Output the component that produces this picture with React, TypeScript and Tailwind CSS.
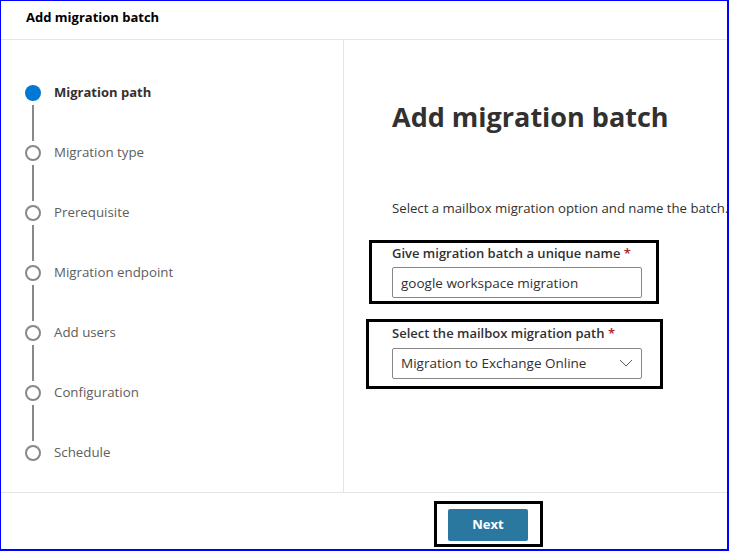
const font = { fontFamily: '"Open Sans", "Noto Sans", Arial, sans-serif' };

const steps = [
  "Migration path",
  "Migration type",
  "Prerequisite",
  "Migration endpoint",
  "Add users",
  "Configuration",
  "Schedule",
];

function Stepper() {
  return (
    <div className="flex flex-col pl-[24px] pt-[45px]">
      {steps.map((label, i) => {
        const active = i === 0;
        const last = i === steps.length - 1;
        return (
          <div key={label} className="flex flex-col">
            <div className="flex h-[16px] items-center">
              {active ? (
                <div className="h-[16px] w-[16px] rounded-full bg-[#0078d4]" />
              ) : (
                <div className="h-[16px] w-[16px] rounded-full border-2 border-[#8a8886] bg-white" />
              )}
              <span
                className={
                  active
                    ? "ml-[13px] text-[13px] font-bold text-[#323130]"
                    : "ml-[13px] text-[13.3px] text-[#605e5c]"
                }
              >
                {label}
              </span>
            </div>
            {!last && (
              <div className="flex h-[44px] w-[16px] justify-center py-[4px]">
                <div className="w-[2px] bg-[#8a8886]" />
              </div>
            )}
          </div>
        );
      })}
    </div>
  );
}

function Chevron() {
  return (
    <svg width="14" height="8" viewBox="0 0 14 8" fill="none">
      <path d="M1 1L7 7L13 1" stroke="#605e5c" strokeWidth="1" />
    </svg>
  );
}

export default function App() {
  return (
    <div
      className="relative flex h-[551px] w-[729px] flex-col overflow-hidden border-b-2 border-l border-r-2 border-t border-[#0000ff] bg-white"
      style={font}
    >
      {/* header */}
      <div className="flex h-[39px] shrink-0 items-center border-b border-[#e5e5e5] pl-[25px] pb-[4px]">
        <span className="text-[13px] font-bold text-black">Add migration batch</span>
      </div>

      {/* body */}
      <div className="flex h-[453px] shrink-0 border-b border-[#e5e5e5]">
        <div className="w-[343px] shrink-0 border-r border-[#e5e5e5]">
          <Stepper />
        </div>
        <div className="min-w-0 flex-1 overflow-hidden pl-[48px] pt-[57px]">
          <h1 className="text-[27px] font-bold leading-[40px] text-[#323130]">Add migration batch</h1>
          <p className="mt-[62px] whitespace-nowrap text-[13.2px] text-[#323130]">
            Select a mailbox migration option and name the batch.
          </p>

          <div className="relative mt-[25px] w-[250px]">
            <label className="block text-[13px] font-semibold text-[#323130]">
              Give migration batch a unique name <span className="text-[#a4262c]">*</span>
            </label>
            <div className="mt-[4px] flex h-[31px] items-center rounded-[2px] border border-[#8a8886] px-[8px] text-[13.5px] text-[#323130]">
              google workspace migration
            </div>
            <div className="pointer-events-none absolute -left-[23px] -right-[17px] -top-[4px] -bottom-[6px] border-[3px] border-black" />
          </div>

          <div className="relative mt-[26px] w-[250px]">
            <label className="block text-[13px] font-semibold text-[#323130]">
              Select the mailbox migration path <span className="text-[#a4262c]">*</span>
            </label>
            <div className="mt-[4px] flex h-[31px] items-center justify-between rounded-[2px] border border-[#8a8886] pl-[8px] pr-[8px] text-[13.5px] text-[#323130]">
              <span>Migration to Exchange Online</span>
              <Chevron />
            </div>
            <div className="pointer-events-none absolute -left-[26px] -right-[21px] -top-[5px] -bottom-[10px] border-[3px] border-black" />
          </div>
        </div>
      </div>

      {/* footer */}
      <div className="flex flex-1 pl-[447px] pt-[16px]">
        <div className="relative h-[32px]">
          <button className="flex h-[32px] w-[80px] items-center justify-center rounded-[2px] bg-[#2a789f] text-[13px] font-bold text-white">
            Next
          </button>
          <div className="pointer-events-none absolute -left-[14px] -right-[15px] -top-[8px] -bottom-[6px] border-[3px] border-black" />
        </div>
      </div>
    </div>
  );
}
